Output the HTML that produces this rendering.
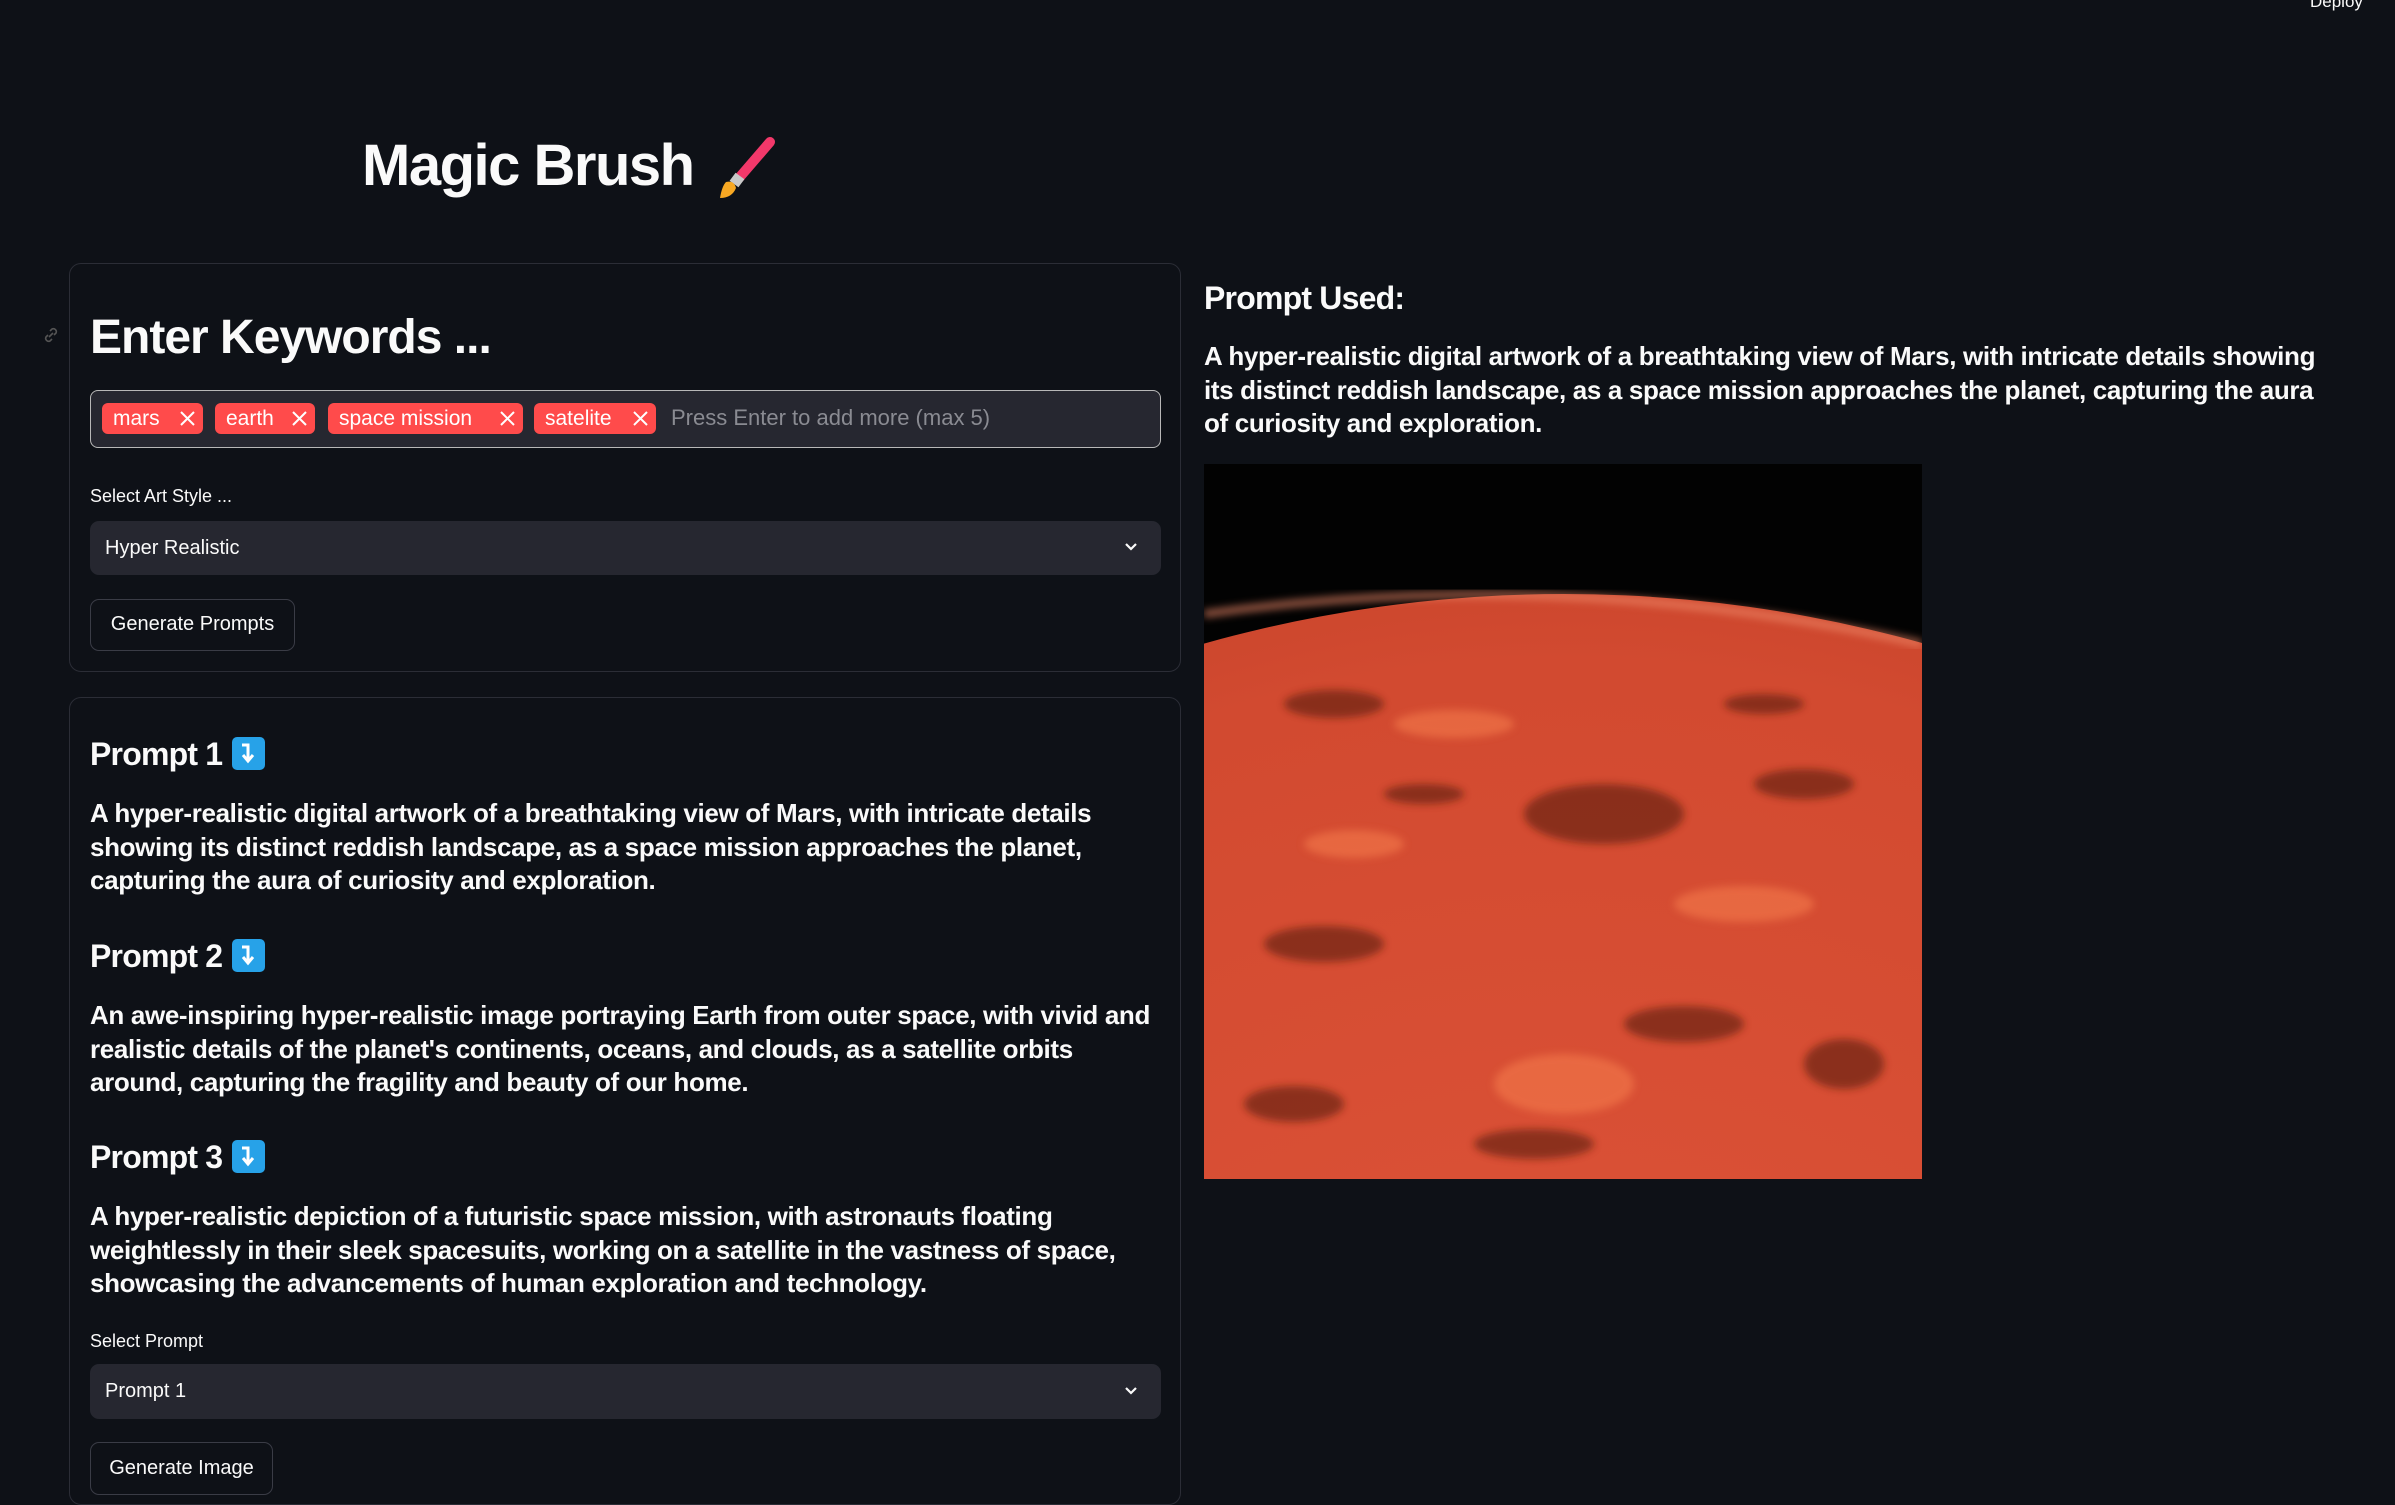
<!DOCTYPE html>
<html><head><meta charset="utf-8"><style>
*{box-sizing:border-box;margin:0;padding:0}
body{width:2395px;height:1503px;background:#0e1117;color:#fafafa;font-family:"Liberation Sans",sans-serif;position:relative;overflow:hidden}
.abs{position:absolute}
.card{position:absolute;border:1.5px solid #2b2d36;border-radius:12px}
.h1{font-weight:700;font-size:58px;letter-spacing:-1.5px}
.tag{position:absolute;top:403px;height:31px;background:#ff4b4b;border-radius:6px;color:#fff;font-size:21px;line-height:31px;padding-left:11px}
.tag svg{position:absolute;right:8px;top:8px}
.label{font-size:18px;color:#fafafa}
.sel{position:absolute;left:90px;width:1071px;background:#262730;border-radius:9px;font-size:20px;color:#fafafa;padding-left:15px}
.btn{position:absolute;left:90px;border:1.5px solid #3a3c46;border-radius:9px;font-size:20px;color:#fafafa;text-align:center}
.ph{position:absolute;left:90px;font-size:32px;font-weight:600;letter-spacing:-0.8px}
.ph .ic{display:inline-block;width:33px;height:33px;background:#27a2e8;border-radius:5px;vertical-align:-5px;margin-left:10px;position:relative}
.p{position:absolute;font-size:26px;font-weight:700;line-height:33.6px;letter-spacing:-0.35px;white-space:nowrap}
</style></head><body>
<div class="abs" style="left:2310px;top:-8px;font-size:17px;color:#fafafa">Deploy</div>

<div class="abs h1" style="left:362px;top:132px">Magic Brush</div>
<svg class="abs" style="left:712px;top:136px" width="66" height="64" viewBox="0 0 66 64">
<line x1="58" y1="6" x2="27" y2="42" stroke="#f2386a" stroke-width="10" stroke-linecap="round"/>
<line x1="28" y1="40" x2="22" y2="48" stroke="#c9c9c9" stroke-width="11"/>
<path d="M14 46 Q22 44 24 52 Q20 62 8 62 Q10 50 14 46Z" fill="#f7a823"/>
</svg>

<div class="card" style="left:69px;top:263px;width:1112px;height:409px"></div>
<svg class="abs" style="left:42px;top:326px" width="18" height="18" viewBox="0 0 18 18" fill="none" stroke="#555" stroke-width="1.6"><path d="M7 11l4-4M8 5l2-2a3 3 0 014 4l-2 2M10 13l-2 2a3 3 0 01-4-4l2-2"/></svg>
<div class="abs" style="left:90px;top:310px;font-size:48px;font-weight:700;letter-spacing:-1px">Enter Keywords ...</div>
<div class="abs" style="left:90px;top:390px;width:1071px;height:58px;background:#262730;border:1.5px solid #b8b8b8;border-radius:8px"></div>
<div class="tag" style="left:102px;width:101px">mars<svg width="15" height="15" viewBox="0 0 15 15" stroke="#fff" stroke-width="2"><path d="M1 1l13 13M14 1L1 14"/></svg></div>
<div class="tag" style="left:215px;width:100px">earth<svg width="15" height="15" viewBox="0 0 15 15" stroke="#fff" stroke-width="2"><path d="M1 1l13 13M14 1L1 14"/></svg></div>
<div class="tag" style="left:328px;width:195px">space mission<svg width="15" height="15" viewBox="0 0 15 15" stroke="#fff" stroke-width="2"><path d="M1 1l13 13M14 1L1 14"/></svg></div>
<div class="tag" style="left:534px;width:122px">satelite<svg width="15" height="15" viewBox="0 0 15 15" stroke="#fff" stroke-width="2"><path d="M1 1l13 13M14 1L1 14"/></svg></div>
<div class="abs" style="left:671px;top:405px;font-size:22px;color:#8a8b92">Press Enter to add more (max 5)</div>

<div class="abs label" style="left:90px;top:486px">Select Art Style ...</div>
<div class="sel" style="top:521px;height:54px;line-height:54px">Hyper Realistic</div>
<svg class="abs" style="left:1124px;top:540px" width="14" height="14" viewBox="0 0 14 14" fill="none" stroke="#fafafa" stroke-width="2.2"><path d="M2 4l5 5 5-5"/></svg>
<div class="btn" style="top:599px;width:205px;height:52px;line-height:49px">Generate Prompts</div>

<div class="card" style="left:69px;top:697px;width:1112px;height:808px"></div>
<div class="ph" style="top:736px">Prompt 1<span class="ic"><svg class="abs" style="left:8px;top:5px" width="18" height="24" viewBox="0 0 18 24" fill="none" stroke="#fff" stroke-width="3"><path d="M2 3h6v15"/><path d="M3 13l5 6 5-6"/></svg></span></div>
<div class="p" style="left:90px;top:797px">A hyper-realistic digital artwork of a breathtaking view of Mars, with intricate details<br>showing its distinct reddish landscape, as a space mission approaches the planet,<br>capturing the aura of curiosity and exploration.</div>
<div class="ph" style="top:938px">Prompt 2<span class="ic"><svg class="abs" style="left:8px;top:5px" width="18" height="24" viewBox="0 0 18 24" fill="none" stroke="#fff" stroke-width="3"><path d="M2 3h6v15"/><path d="M3 13l5 6 5-6"/></svg></span></div>
<div class="p" style="left:90px;top:999px">An awe-inspiring hyper-realistic image portraying Earth from outer space, with vivid and<br>realistic details of the planet's continents, oceans, and clouds, as a satellite orbits<br>around, capturing the fragility and beauty of our home.</div>
<div class="ph" style="top:1139px">Prompt 3<span class="ic"><svg class="abs" style="left:8px;top:5px" width="18" height="24" viewBox="0 0 18 24" fill="none" stroke="#fff" stroke-width="3"><path d="M2 3h6v15"/><path d="M3 13l5 6 5-6"/></svg></span></div>
<div class="p" style="left:90px;top:1200px">A hyper-realistic depiction of a futuristic space mission, with astronauts floating<br>weightlessly in their sleek spacesuits, working on a satellite in the vastness of space,<br>showcasing the advancements of human exploration and technology.</div>
<div class="abs label" style="left:90px;top:1331px">Select Prompt</div>
<div class="sel" style="top:1364px;height:55px;line-height:55px">Prompt 1</div>
<svg class="abs" style="left:1124px;top:1384px" width="14" height="14" viewBox="0 0 14 14" fill="none" stroke="#fafafa" stroke-width="2.2"><path d="M2 4l5 5 5-5"/></svg>
<div class="btn" style="top:1442px;width:183px;height:53px;line-height:50px">Generate Image</div>

<div class="abs" style="left:1204px;top:280px;font-size:32px;font-weight:700;letter-spacing:-0.8px">Prompt Used:</div>
<div class="p" style="left:1204px;top:340px">A hyper-realistic digital artwork of a breathtaking view of Mars, with intricate details showing<br>its distinct reddish landscape, as a space mission approaches the planet, capturing the aura<br>of curiosity and exploration.</div>

<svg class="abs" style="left:1204px;top:464px" width="718" height="715" viewBox="0 0 718 715">
<defs>
<radialGradient id="g" cx="0.5" cy="0.45" r="0.7"><stop offset="0" stop-color="#e0553a"/><stop offset="0.6" stop-color="#d24a30"/><stop offset="1" stop-color="#a8321f"/></radialGradient>
<filter id="b"><feGaussianBlur stdDeviation="4"/></filter>
</defs>
<rect width="718" height="715" fill="#020202"/>
<ellipse cx="360" cy="1300" rx="1250" ry="1170" fill="url(#g)"/>
<path d="M0 150 Q360 100 718 180" stroke="#f08a6a" stroke-width="8" fill="none" opacity="0.6" filter="url(#b)"/>
<g filter="url(#b)" fill="#5a1a10" opacity="0.6">
<ellipse cx="130" cy="240" rx="50" ry="14"/>
<ellipse cx="400" cy="350" rx="80" ry="30"/>
<ellipse cx="220" cy="330" rx="40" ry="10"/>
<ellipse cx="600" cy="320" rx="50" ry="15"/>
<ellipse cx="120" cy="480" rx="60" ry="18"/>
<ellipse cx="480" cy="560" rx="60" ry="18"/>
<ellipse cx="640" cy="600" rx="40" ry="25"/>
<ellipse cx="90" cy="640" rx="50" ry="18"/>
<ellipse cx="330" cy="680" rx="60" ry="15"/>
<ellipse cx="560" cy="240" rx="40" ry="10"/>
</g>
<g filter="url(#b)" fill="#f47a4c" opacity="0.6">
<ellipse cx="360" cy="620" rx="70" ry="30"/>
<ellipse cx="250" cy="260" rx="60" ry="14"/>
<ellipse cx="540" cy="440" rx="70" ry="18"/>
<ellipse cx="150" cy="380" rx="50" ry="14"/>
</g>
</svg>
</body></html>
